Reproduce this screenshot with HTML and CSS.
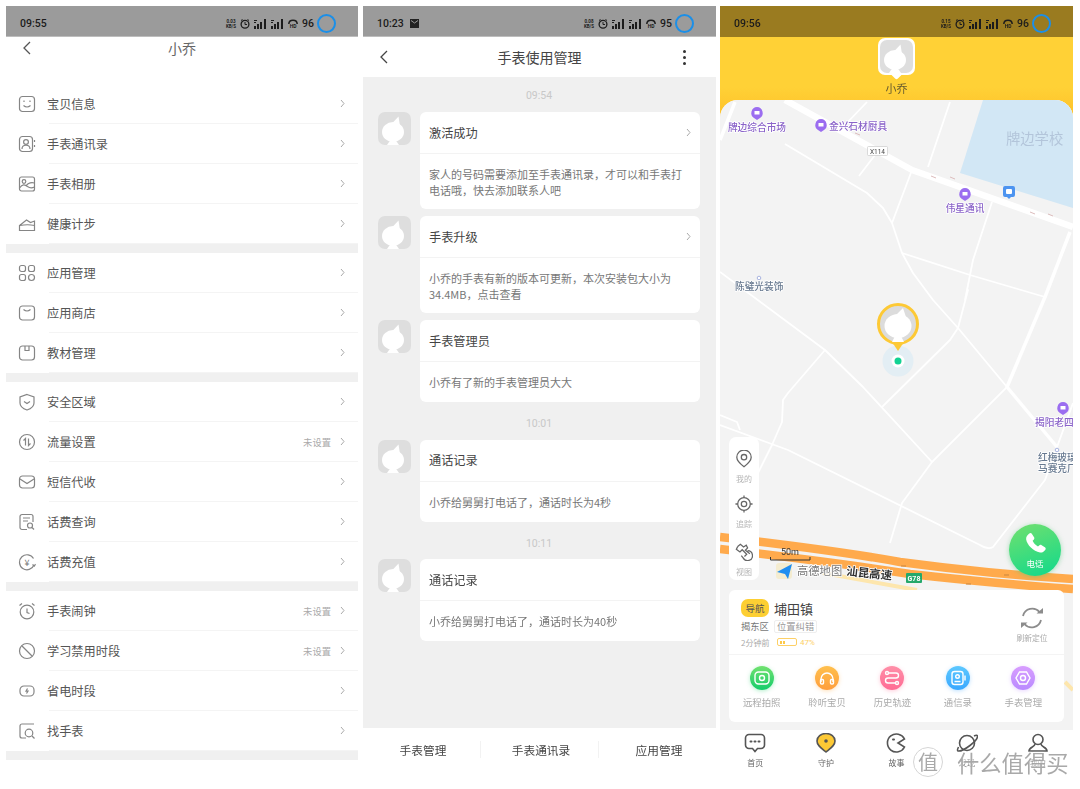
FILE: index.html
```html
<!DOCTYPE html>
<html lang="zh-CN">
<head>
  <meta charset="UTF-8" />
  <meta name="viewport" content="width=device-width, initial-scale=1.0"/>
  <title>小乔 - 手表管理</title>
  <link rel="stylesheet" href="styles.css">
</head>
<body>

<svg class="defs" width="0" height="0">
  <symbol id="kid" viewBox="0 0 33 33">
    <rect width="33" height="33" rx="7" fill="#dedede"/>
    <ellipse cx="15" cy="20" rx="11" ry="10" fill="#fff"/>
    <path d="M14 11.500 20.500 4.500 22 14z" fill="#fff"/>
    <path d="M9 33l3.500-5h5l3.500 5z" fill="#fff"/>
  </symbol>
  <symbol id="clock" viewBox="0 0 10 10"><circle cx="5" cy="5.300" r="3.900" fill="none" stroke="currentColor" stroke-width="1.300"/><path d="M5 3v2.500h2" fill="none" stroke="currentColor"/><path d="M1 1.500 2.500.5M9 1.500 7.500.5" stroke="currentColor"/></symbol>
  <symbol id="signal" viewBox="0 0 13 10"><path d="M0 7h2v3H0zM3 5h2v5H3zM6 3h2v7H6zM10 0h2v10h-2z" fill="currentColor"/><path d="M0 1h3v1H0zM0 3h2v1H0z" fill="currentColor"/></symbol>
  <symbol id="arch" viewBox="0 0 10 5"><path d="M.8 5C1 0 9 0 9.200 5" fill="none" stroke="currentColor" stroke-width="1.500"/></symbol>
  <symbol id="chev" viewBox="0 0 5 9"><path d="M1 1l3 3.500L1 8" fill="none" stroke="#aaa" stroke-width="1"/></symbol>
</svg>

<div class="page">

  <!-- left phone: settings list -->
  <section class="phone phone-list">
    <div class="status">
      <span class="time">09:55</span>
      <span class="status-right">
        <span class="speed">0.03<br>KB/S</span>
        <svg class="si-clock"><use href="#clock"/></svg>
        <svg class="si-signal"><use href="#signal"/></svg>
        <svg class="si-signal"><use href="#signal"/></svg>
        <span class="si-wifi"><svg class="si-arch"><use href="#arch"/></svg><b>HD</b></span>
        <span class="batt">96</span>
        <span class="ring"></span>
      </span>
    </div>
    <div class="topbar topbar-top">
      <span class="back"><svg width="8" height="14" viewBox="0 0 8 14"><path d="M7 1 1 7l6 6" fill="none" stroke="#555" stroke-width="1.300"/></svg></span>
      <h1 class="title title-light">小乔</h1>
      <span class="topbar-side"></span>
    </div>

    <ul class="menu">
      <li class="row"><svg class="ic" viewBox="0 0 18 18"><rect x="1.500" y="1.500" width="15" height="15" rx="3"/><path d="M6 5.500v1.500M12 5.500v1.500M5.500 10.500q3.500 3 7 0"/></svg><div class="row-body"><span class="row-label">宝贝信息</span><svg class="chev"><use href="#chev"/></svg></div></li>
      <li class="row"><svg class="ic" viewBox="0 0 18 18"><rect x="1.500" y="1.500" width="13" height="15" rx="3"/><circle cx="8" cy="7" r="2.400"/><path d="M4 14c0-5 8-5 8 0M16.500 5v2M16.500 10v2"/></svg><div class="row-body"><span class="row-label">手表通讯录</span><svg class="chev"><use href="#chev"/></svg></div></li>
      <li class="row"><svg class="ic" viewBox="0 0 18 18"><rect x="1.500" y="2" width="15" height="14" rx="2"/><circle cx="6" cy="6.500" r="1.800"/><path d="M1.500 13c3-4 5-4 8-1.500 2 1.500 4 2 7 .5M8 11c2-3 4-4 8.500-3"/></svg><div class="row-body"><span class="row-label">手表相册</span><svg class="chev"><use href="#chev"/></svg></div></li>
      <li class="row"><svg class="ic" viewBox="0 0 18 18"><path d="M1.500 15.500v-5l7-5.500 4 2.500 4-1.500v9.500zM2 10.500c5-1 10-1 14.500 0"/></svg><div class="row-body"><span class="row-label">健康计步</span><svg class="chev"><use href="#chev"/></svg></div></li>
    </ul>
    <div class="band"></div>

    <ul class="menu">
      <li class="row"><svg class="ic" viewBox="0 0 18 18"><rect x="1.500" y="1.500" width="6" height="6" rx="2"/><rect x="10.500" y="1.500" width="6" height="6" rx="2"/><rect x="1.500" y="10.500" width="6" height="6" rx="2"/><circle cx="13.500" cy="13.500" r="3"/></svg><div class="row-body"><span class="row-label">应用管理</span><svg class="chev"><use href="#chev"/></svg></div></li>
      <li class="row"><svg class="ic" viewBox="0 0 18 18"><rect x="1.500" y="2" width="15" height="14" rx="3"/><path d="M5.500 5.500q3.500 3 7 0"/></svg><div class="row-body"><span class="row-label">应用商店</span><svg class="chev"><use href="#chev"/></svg></div></li>
      <li class="row"><svg class="ic" viewBox="0 0 18 18"><rect x="1.500" y="2" width="15" height="14" rx="3"/><path d="M7 2v4.500h4V2"/></svg><div class="row-body"><span class="row-label">教材管理</span><svg class="chev"><use href="#chev"/></svg></div></li>
    </ul>
    <div class="band"></div>

    <ul class="menu">
      <li class="row"><svg class="ic" viewBox="0 0 18 18"><path d="M9 1.500l7 2.500v6c0 4-4 6-7 7-3-1-7-3-7-7V4zM6 8.500l3 2 3-2"/></svg><div class="row-body"><span class="row-label">安全区域</span><svg class="chev"><use href="#chev"/></svg></div></li>
      <li class="row"><svg class="ic" viewBox="0 0 18 18"><circle cx="9" cy="9" r="7.500"/><path d="M7.500 12.500v-7l-2 2M10.500 5.500v7l2-2"/></svg><div class="row-body"><span class="row-label">流量设置</span><span class="row-value">未设置</span><svg class="chev"><use href="#chev"/></svg></div></li>
      <li class="row"><svg class="ic" viewBox="0 0 18 18"><rect x="1.500" y="3" width="15" height="12" rx="3"/><path d="M2 6l7 4.500L16 6"/></svg><div class="row-body"><span class="row-label">短信代收</span><svg class="chev"><use href="#chev"/></svg></div></li>
      <li class="row"><svg class="ic" viewBox="0 0 18 18"><path d="M9 16.500H4a2 2 0 0 1-2-2v-11a2 2 0 0 1 2-2h9a2 2 0 0 1 2 2V9M5 5h7M5 8h5"/><circle cx="12" cy="12.500" r="2.500"/><path d="M14 14.500l2 2"/></svg><div class="row-body"><span class="row-label">话费查询</span><svg class="chev"><use href="#chev"/></svg></div></li>
      <li class="row"><svg class="ic" viewBox="0 0 18 18"><path d="M15.500 5.500A7.500 7.500 0 1 0 16 12"/><path d="M14.500 11.500l1.800 1.500 1.200-1.800"/><text x="9" y="12.500" class="ic-text">¥</text></svg><div class="row-body"><span class="row-label">话费充值</span><svg class="chev"><use href="#chev"/></svg></div></li>
    </ul>
    <div class="band"></div>

    <ul class="menu">
      <li class="row"><svg class="ic" viewBox="0 0 18 18"><circle cx="9" cy="10" r="6.800"/><path d="M9 6.500V10.500l2.500 1M1.500 3.500 4 1.500M16.500 3.500 14 1.500"/></svg><div class="row-body"><span class="row-label">手表闹钟</span><span class="row-value">未设置</span><svg class="chev"><use href="#chev"/></svg></div></li>
      <li class="row"><svg class="ic" viewBox="0 0 18 18"><circle cx="9" cy="9" r="7.500"/><path d="M4 4l10 10"/></svg><div class="row-body"><span class="row-label">学习禁用时段</span><span class="row-value">未设置</span><svg class="chev"><use href="#chev"/></svg></div></li>
      <li class="row"><svg class="ic" viewBox="0 0 18 18"><rect x="2" y="4" width="14" height="10" rx="4"/><path d="M9.500 6.500 8 9.200h2L8.500 11.500"/></svg><div class="row-body"><span class="row-label">省电时段</span><svg class="chev"><use href="#chev"/></svg></div></li>
      <li class="row"><svg class="ic" viewBox="0 0 18 18"><path d="M16 2H4a2 2 0 0 0-2 2v10a2 2 0 0 0 2 2h4"/><circle cx="11" cy="11" r="3.800"/><path d="M14 14l2.500 2.500"/></svg><div class="row-body"><span class="row-label">找手表</span><svg class="chev"><use href="#chev"/></svg></div></li>
    </ul>
    <div class="band"></div>
  </section>

  <!-- middle phone: message list -->
  <section class="phone phone-msg">
    <div class="status">
      <span class="time">10:23<svg class="si-mail" viewBox="0 0 9 9"><path d="M0 0h9v9H0z" fill="#222"/><path d="M1 1.500l3.500 2.500L8 1.500" fill="none" stroke="#999"/></svg></span>
      <span class="status-right">
        <span class="speed">0.08<br>KB/S</span>
        <svg class="si-clock"><use href="#clock"/></svg>
        <svg class="si-signal"><use href="#signal"/></svg>
        <svg class="si-signal"><use href="#signal"/></svg>
        <span class="si-wifi"><svg class="si-arch"><use href="#arch"/></svg><b>HD</b></span>
        <span class="batt">95</span>
        <span class="ring"></span>
      </span>
    </div>
    <div class="topbar">
      <span class="back"><svg width="8" height="14" viewBox="0 0 8 14"><path d="M7 1 1 7l6 6" fill="none" stroke="#444" stroke-width="1.300"/></svg></span>
      <h1 class="title">手表使用管理</h1>
      <span class="topbar-side more"><i></i><i></i><i></i></span>
    </div>

    <div class="msg-list">
      <div class="msg-time msg-time-first">09:54</div>
      <div class="msg">
        <svg class="msg-avatar"><use href="#kid"/></svg>
        <div class="msg-card">
          <div class="msg-head">激活成功<svg class="chev"><use href="#chev"/></svg></div>
          <p class="msg-body msg-body-two">家人的号码需要添加至手表通讯录，才可以和手表打电话哦，快去添加联系人吧</p>
        </div>
      </div>
      <div class="msg">
        <svg class="msg-avatar"><use href="#kid"/></svg>
        <div class="msg-card">
          <div class="msg-head">手表升级<svg class="chev"><use href="#chev"/></svg></div>
          <p class="msg-body msg-body-two">小乔的手表有新的版本可更新，本次安装包大小为<br>34.4MB，点击查看</p>
        </div>
      </div>
      <div class="msg">
        <svg class="msg-avatar"><use href="#kid"/></svg>
        <div class="msg-card">
          <div class="msg-head">手表管理员</div>
          <p class="msg-body">小乔有了新的手表管理员大大</p>
        </div>
      </div>
      <div class="msg-time">10:01</div>
      <div class="msg">
        <svg class="msg-avatar"><use href="#kid"/></svg>
        <div class="msg-card">
          <div class="msg-head">通话记录</div>
          <p class="msg-body">小乔给舅舅打电话了，通话时长为4秒</p>
        </div>
      </div>
      <div class="msg-time">10:11</div>
      <div class="msg">
        <svg class="msg-avatar"><use href="#kid"/></svg>
        <div class="msg-card">
          <div class="msg-head">通话记录</div>
          <p class="msg-body">小乔给舅舅打电话了，通话时长为40秒</p>
        </div>
      </div>
    </div>

    <div class="tabs">
      <span class="tab">手表管理</span>
      <span class="tab">手表通讯录</span>
      <span class="tab">应用管理</span>
    </div>
  </section>

  <!-- right phone: map -->
  <section class="phone phone-map">
    <div class="status status-gold">
      <span class="time">09:56</span>
      <span class="status-right">
        <span class="speed">0.15<br>KB/S</span>
        <svg class="si-clock"><use href="#clock"/></svg>
        <svg class="si-signal"><use href="#signal"/></svg>
        <svg class="si-signal"><use href="#signal"/></svg>
        <span class="si-wifi"><svg class="si-arch"><use href="#arch"/></svg><b>HD</b></span>
        <span class="batt">96</span>
        <span class="ring"></span>
      </span>
    </div>
    <div class="kid-head">
      <span class="kid-photo"><svg class="kid-img"><use href="#kid"/></svg></span>
      <span class="kid-name">小乔</span>
    </div>

    <div class="map">
      <svg class="map-canvas" viewBox="720 100 353 630">
        <rect x="720" y="100" width="353" height="630" fill="#f3f3f3"/>
        <path d="M983 100h90v108L960 173z" fill="#d2e7f5"/>
        <g class="road road-thin">
          <path d="M867 102l-24 25M950 102l-22 65M875 155l-16 21"/>
          <path d="M785 144l82 49 16 15 9 15 10 30 11 20 20 27 25 28 49 59"/>
          <path d="M912 170l-20 53M992 202l-19 58-8 40 3-10-10 38-8 12-68 67"/>
          <path d="M902 253l68 22 75 22"/>
          <path d="M1073 403l-16 44-12 33-52 67q-5 3-13-2L788 450l-68-25"/>
          <path d="M1007 387l-75 75-30 41-12 40"/>
          <path d="M720 272l105 78 38 37 69 75"/>
          <path d="M825 350l-37 43-5 7-1 22-10 23-14 28"/>
          <path d="M720 415l17 7 3 8"/>
        </g>
        <g class="road road-mid">
          <path d="M735 102l-15 38"/>
          <path d="M1070 232l-25 65-38 90 50 60"/>
        </g>
        <path class="road road-main" d="M785 100l127 70 161 57"/>
        <path d="M823 573l94 17M1065 682l8 8" fill="none" stroke="#fde6ad" stroke-width="4"/>
        <path d="M720 537q120 14 180 25 90 12 173 17M720 549q120 14 190 25 90 10 163 15" fill="none" stroke="#ffaa4c" stroke-width="8.500"/>
        <path d="M855 133l5 2M931 176l5 2M950 177l5 2M1030 212l5 2M1048 214l5 2" stroke="#dcbcbc" stroke-width="1"/>
        <path d="M901 566h5M1004 575h5M966 584h5M886 577h5" stroke="#c9853c" stroke-width="1"/>

        <g class="poi">
          <path d="M757 107a6 6 0 0 1 3 11l-3 2-3-2a6 6 0 0 1 3-11z"/><rect x="754.500" y="111" width="5" height="3.500" fill="#fff"/>
          <path d="M821 119a6 6 0 0 1 3 11l-3 2-3-2a6 6 0 0 1 3-11z"/><rect x="818.500" y="123" width="5" height="3.500" fill="#fff"/>
          <path d="M965 188a6 6 0 0 1 3 11l-3 2-3-2a6 6 0 0 1 3-11z"/><rect x="962.500" y="192" width="5" height="3.500" fill="#fff"/>
          <path d="M1063 402a6 6 0 0 1 3 11l-3 2-3-2a6 6 0 0 1 3-11z"/><rect x="1060.500" y="406" width="5" height="3.500" fill="#fff"/>
        </g>
        <path d="M1005 186h8a2 2 0 0 1 2 2v7a2 2 0 0 1-2 2h-2l-2 2-2-2h-2a2 2 0 0 1-2-2v-7a2 2 0 0 1 2-2z" fill="#4d94f0"/>
        <rect x="1006" y="189" width="6" height="5" rx="1" fill="#fff"/>
        <circle cx="759" cy="278" r="1.800" fill="#fff" stroke="#a9b4e0"/>
        <circle cx="1057" cy="450" r="1.800" fill="#fff" stroke="#a9b4e0"/>

        <text class="label label-poi" x="757" y="131" text-anchor="middle">牌边综合市场</text>
        <text class="label label-poi" x="829" y="130">金兴石材厨具</text>
        <text class="label label-poi" x="965" y="212" text-anchor="middle">伟星通讯</text>
        <text class="label label-poi" x="1035" y="426">揭阳老四</text>
        <text class="label label-school" x="1006" y="144">牌边学校</text>
        <text class="label label-shop" x="735" y="290">陈璧光装饰</text>
        <text class="label label-shop" x="1038" y="461">红梅玻璃</text>
        <text class="label label-shop" x="1038" y="472">马赛克厂</text>

        <rect x="867.500" y="146.500" width="20" height="9" rx="1" fill="#fff" stroke="#ccc" stroke-width=".7"/>
        <text class="label-x" x="877.500" y="153.500" text-anchor="middle">X114</text>

        <rect x="906" y="573" width="16" height="10" rx="1" fill="#25a86b"/>
        <text class="label-g" x="914" y="581" text-anchor="middle">G78</text>

        <text class="label-scale" x="781" y="555">50m</text>
        <path d="M770.500 557v3h39.500v-3" fill="none" stroke="#333" stroke-width="1"/>
        <rect x="776" y="563" width="16" height="16" rx="3" fill="#f4ecd0"/>
        <path d="M777 572l15-8-4 15-3-5z" fill="#1f8ef1"/>
        <text class="label-brand" x="797" y="575">高德地图</text>
        <text class="label-road" transform="translate(846 575) rotate(6)">汕昆高速</text>

        <circle cx="898" cy="361" r="15.500" fill="#e3eef4"/>
        <circle cx="898" cy="361" r="6.500" fill="#fff"/>
        <circle cx="898" cy="361" r="3.500" fill="#12d293"/>
        <path d="M892 342h12l-6 9z" fill="#fdc935"/>
        <circle cx="898" cy="324" r="19.500" fill="#dcdcdc" stroke="#fdc935" stroke-width="3"/>
        <ellipse cx="898" cy="326" rx="13.500" ry="12" fill="#fff"/>
        <path d="M896 315l7-7 3 9zM892 342l3-6h6l3 6z" fill="#fff"/>
      </svg>

      <div class="tools">
        <div class="tool">
          <svg class="tool-ic" viewBox="0 0 20 20"><path d="M10 18.500C6 15.500 2 12.500 2 8a8 8 0 0 1 16 0c0 4.500-4 7.500-8 10.500z"/><circle cx="10" cy="8" r="3"/></svg>
          <span>我的</span>
        </div>
        <div class="tool">
          <svg class="tool-ic" viewBox="0 0 20 20"><circle cx="10" cy="10" r="7"/><circle cx="10" cy="10" r="3"/><path d="M10 .5V3M10 17v2.500M.5 10H3M17 10h2.500"/></svg>
          <span>追踪</span>
        </div>
        <div class="tool">
          <svg class="tool-ic" viewBox="0 0 20 20"><path d="M3 4l3-2.500 3.500 3 3-2 1.500 3-2.500 2.500 5 4M3 4 1.500 7l4 3 2.500-2.500 5 5-2.500 2.500M14 8.500a5.500 5.500 0 1 1-5 8l-2-2.500"/></svg>
          <span>视图</span>
        </div>
      </div>

      <div class="call">
        <svg class="call-ic" viewBox="0 0 24 24"><path d="M6 2.500c1-.8 2-.6 2.600.3l2 3.200c.5.800.4 1.600-.3 2.300L9.200 9.400c.8 2 2.900 4.300 5.200 5.400l1.100-1c.7-.6 1.600-.7 2.400-.2l3.100 2c.9.600 1.100 1.700.3 2.600-1.400 1.700-3 2.800-5 2.500C10 19.700 3.800 13.500 3 8c-.2-2.200 1.300-4.200 3-5.500z"/></svg>
        <span>电话</span>
      </div>

      <div class="place">
        <div class="place-top">
          <div class="place-info">
            <div class="place-line"><span class="nav-pill">导航</span><span class="town">埔田镇</span></div>
            <div class="place-line place-line-sub"><span class="district">揭东区</span><span class="fix">位置纠错</span></div>
            <div class="place-line place-line-meta"><span class="ago">2分钟前</span><span class="power"><i></i><i></i></span><span class="percent">47%</span></div>
          </div>
          <div class="refresh">
            <svg class="refresh-ic" viewBox="0 0 26 26"><path d="M4 11A9.500 9.500 0 0 1 20.500 7M22 15a9.500 9.500 0 0 1-16.500 4"/><path class="fill" d="M17.500 8.500h6.500V3zM8.500 17.500H2V23z"/></svg>
            <span>刷新定位</span>
          </div>
        </div>
        <div class="features">
          <div class="feature">
            <span class="f-dot f-green"><svg viewBox="0 0 24 24"><rect x="5" y="6" width="14" height="12" rx="3.500"/><circle cx="12" cy="12" r="2.500"/></svg></span>
            <span>远程拍照</span>
          </div>
          <div class="feature">
            <span class="f-dot f-orange"><svg viewBox="0 0 24 24"><path d="M6 16v-3a6 6 0 0 1 12 0v3"/><rect x="5.500" y="13.500" width="3" height="4.500" rx="1"/><rect x="15.500" y="13.500" width="3" height="4.500" rx="1"/></svg></span>
            <span>聆听宝贝</span>
          </div>
          <div class="feature">
            <span class="f-dot f-pink"><svg viewBox="0 0 24 24"><path d="M8 7h8a2.500 2.500 0 0 1 0 5H8a2.500 2.500 0 0 0 0 5h8"/><circle cx="7" cy="7" r="1.500"/><circle cx="17" cy="17" r="1.500"/></svg></span>
            <span>历史轨迹</span>
          </div>
          <div class="feature">
            <span class="f-dot f-blue"><svg viewBox="0 0 24 24"><rect x="6" y="5.500" width="11" height="13" rx="2.500"/><circle cx="11.500" cy="10.500" r="1.800"/><path d="M8.500 15.500h6M19 9.500v5"/></svg></span>
            <span>通信录</span>
          </div>
          <div class="feature">
            <span class="f-dot f-purple"><svg viewBox="0 0 24 24"><path d="M8.500 6h7l3.500 6-3.500 6h-7L5 12z"/><circle cx="12" cy="12" r="2.500"/></svg></span>
            <span>手表管理</span>
          </div>
        </div>
      </div>
    </div>

    <nav class="bottom-nav">
      <div class="nav-item">
        <svg viewBox="0 0 22 20"><path d="M5 1.500h12a3.500 3.500 0 0 1 3.500 3.500v7a3.500 3.500 0 0 1-3.500 3.500h-3.500L11 18.500l-2.500-3H5A3.500 3.500 0 0 1 1.500 12V5A3.500 3.500 0 0 1 5 1.500z"/><path class="dots" d="M6.500 8.500h1M10.500 8.500h1M14.500 8.500h1"/></svg>
        <span>首页</span>
      </div>
      <div class="nav-item">
        <svg viewBox="0 0 22 20"><path class="pin" d="M11 19C6 15 2 12.500 2 8a9 7.500 0 0 1 18 0c0 4.500-4 7-9 11z"/><circle cx="11" cy="8" r="1.800" fill="#555" stroke="none"/></svg>
        <span>守护</span>
      </div>
      <div class="nav-item">
        <svg viewBox="0 0 22 20"><path d="M19.500 6A9 9 0 1 0 19.500 14L13 10z"/><path class="dots" d="M8 6.500h1"/></svg>
        <span>故事</span>
      </div>
      <div class="nav-item">
        <svg viewBox="0 0 22 20"><circle cx="11" cy="10" r="7.500"/><path d="M18 3c2-1 3.500-1 3.500.5 0 2-3 5.500-7.500 9-4 3-9.500 6-12 5.500-1-.5-.5-2 .5-4"/></svg>
        <span>发现</span>
      </div>
      <div class="nav-item">
        <svg viewBox="0 0 22 20"><circle cx="11" cy="6.500" r="5"/><path d="M8 11c0 3-6 3-6 7h18c0-4-6-4-6-7"/></svg>
        <span>我的</span>
      </div>
      <div class="watermark"><span class="wm-seal">值</span><span class="wm-text">什么值得买</span></div>
    </nav>
  </section>

</div>

</body>
</html>
```

FILE: styles.css
```css
* {
  box-sizing: border-box;
}

body {
  margin: 0;
  background: #fff;
  font-family: "Noto Sans CJK SC", "Noto Sans", sans-serif;
  color: #555;
}

ul, h1, p {
  margin: 0;
  padding: 0;
  list-style: none;
  font-weight: 400;
}

.defs {
  display: block;
  height: 0;
}

.page {
  display: flex;
  padding: 6px 0 0 6px;
  filter: blur(0.35px);
}

.phone {
  flex: none;
  width: 353px;
  background: #fff;
}

.phone-list {
  width: 352px;
  margin-right: 5px;
}

.phone-msg {
  margin-right: 4px;
}

/* status bar */
.status {
  display: flex;
  justify-content: space-between;
  align-items: center;
  height: 31px;
  padding: 5px 22px 0 14px;
  background: #9b9b9b;
  color: #1c1c1c;
  border-bottom: 1px solid #bdbdbd;
}

.status-gold {
  background: #9a7b20;
  border-bottom-color: #9a7b20;
}

.time {
  display: flex;
  align-items: center;
  font-family: Roboto, sans-serif;
  font-size: 10.5px;
  font-weight: 500;
}

.si-mail {
  width: 9px;
  height: 9px;
  margin-left: 6px;
}

.status-right {
  display: flex;
  align-items: center;
  gap: 4px;
}

.speed {
  font-family: Roboto, sans-serif;
  font-size: 4.5px;
  font-weight: 700;
  line-height: 5px;
  text-align: center;
}

.si-clock {
  width: 10px;
  height: 10px;
}

.si-signal {
  width: 13px;
  height: 10px;
}

.si-wifi {
  display: flex;
  flex-direction: column;
  align-items: center;
  width: 10px;
}

.si-arch {
  width: 10px;
  height: 5px;
}

.si-wifi b {
  font-family: Roboto, sans-serif;
  font-size: 5px;
  line-height: 5px;
}

.batt {
  font-family: Roboto, sans-serif;
  font-size: 10.5px;
  font-weight: 500;
}

.ring {
  width: 19px;
  height: 19px;
  margin-left: -1px;
  border: 2px solid #1b8fe8;
  border-radius: 50%;
}

/* top bars */
.topbar {
  display: flex;
  align-items: center;
  height: 40px;
}

.topbar-top {
  align-items: flex-start;
  height: 47px;
}

.back {
  flex: none;
  display: flex;
  width: 64px;
  height: 22px;
  padding-left: 17px;
  align-items: center;
}

.topbar-side {
  flex: none;
  width: 64px;
}

.title {
  flex: 1;
  font-size: 14px;
  line-height: 22px;
  text-align: center;
  color: #444;
}

.title-light {
  color: #666;
}

.more {
  display: flex;
  flex-direction: column;
  align-items: center;
  gap: 3px;
}

.more i {
  width: 3px;
  height: 3px;
  background: #333;
  border-radius: 50%;
}

/* settings list */
.row {
  display: flex;
  align-items: center;
  height: 40px;
  padding-left: 12px;
}

.ic {
  flex: none;
  width: 18px;
  height: 18px;
  fill: none;
  stroke: #858585;
  stroke-width: 1.2;
}

.ic-text {
  font-size: 9px;
  fill: #777;
  stroke: none;
  text-anchor: middle;
}

.row-body {
  flex: 1;
  display: flex;
  align-items: center;
  height: 40px;
  margin-left: 13px;
  padding-right: 13px;
  border-bottom: 1px solid #f4f4f4;
}

.row-label {
  flex: 1;
  margin-left: -2px;
  font-size: 12.2px;
  color: #555;
}

.row-value {
  margin-right: 9px;
  font-size: 9.3px;
  color: #aaa;
}

.chev {
  flex: none;
  width: 5px;
  height: 9px;
}

.band {
  height: 9px;
  background: #f0f0f0;
}

/* messages */
.msg-list {
  height: 651px;
  padding: 0 16px 0 15px;
  background: #f0f0f0;
}

.msg-time {
  height: 37.5px;
  padding-top: 14px;
  font-family: Roboto, sans-serif;
  font-size: 10.5px;
  line-height: 16px;
  text-align: center;
  color: #c8c8c8;
}

.msg-time-first {
  height: 35px;
  padding-top: 11px;
}

.msg {
  display: flex;
  gap: 9px;
  margin-bottom: 7px;
}

.msg:has(+ .msg-time), .msg:last-child {
  margin-bottom: 0;
}

.msg-avatar {
  flex: none;
  width: 33px;
  height: 33px;
}

.msg-card {
  flex: 1;
  background: #fff;
  border-radius: 6px;
}

.msg-head {
  display: flex;
  justify-content: space-between;
  align-items: center;
  height: 42px;
  padding: 0 9px;
  border-bottom: 1px solid #f3f3f3;
  font-size: 12.2px;
  color: #444;
}

.msg-body {
  padding: 12px 9px;
  font-size: 11px;
  line-height: 16px;
  color: #777;
}

.msg-body-two {
  padding-bottom: 11px;
}

.tabs {
  display: flex;
  align-items: center;
  height: 42px;
}

.tab {
  flex: 1;
  height: 17px;
  padding-left: 3px;
  font-size: 11.7px;
  line-height: 17px;
  text-align: center;
  color: #444;
}

.tab + .tab {
  border-left: 1px solid #f2f2f2;
}

/* map phone */
.kid-head {
  display: flex;
  flex-direction: column;
  align-items: center;
  height: 83px;
  background: linear-gradient(#ffd136 60%, #fec028);
}

.kid-photo {
  position: relative;
  display: block;
  width: 37px;
  height: 37px;
  margin-top: 1px;
  background: #fff;
  border-radius: 7px;
  padding: 2px;
}

.kid-photo::after {
  content: "";
  position: absolute;
  left: 14px;
  bottom: -3px;
  width: 9px;
  height: 9px;
  background: #fff;
  border-radius: 2px;
  transform: rotate(45deg);
}

.kid-img {
  position: relative;
  z-index: 1;
  display: block;
  width: 33px;
  height: 33px;
}

.kid-name {
  margin-top: 6px;
  font-size: 11px;
  line-height: 14px;
  color: #665a2e;
}

.map {
  position: relative;
  display: flex;
  flex-direction: column;
  justify-content: flex-end;
  height: 630px;
  margin-top: -20px;
  padding: 0 9px 8px;
  border-radius: 18px 18px 0 0;
  overflow: hidden;
  background: #f3f3f3;
}

.map-canvas {
  position: absolute;
  top: 0;
  left: 0;
  width: 353px;
  height: 630px;
}

.road {
  fill: none;
  stroke: #fff;
  stroke-linejoin: round;
}

.road-thin {
  stroke-width: 1.8;
}

.road-mid {
  stroke-width: 3.5;
}

.road-main {
  stroke-width: 6.5;
}

.poi {
  fill: #9b6df0;
}

.label {
  font-size: 9.7px;
  font-weight: 500;
  stroke: #fff;
  stroke-width: 1.5px;
  paint-order: stroke;
}

.label-poi {
  fill: #8a63c9;
}

.label-shop {
  fill: #66788f;
}

.label-school {
  font-size: 14.3px;
  font-weight: 400;
  fill: #b3c5da;
  stroke: none;
}

.label-x {
  font-family: Roboto, sans-serif;
  font-size: 6.5px;
  fill: #444;
}

.label-g {
  font-family: Roboto, sans-serif;
  font-size: 7px;
  font-weight: 700;
  fill: #fff;
}

.label-scale {
  font-family: Roboto, sans-serif;
  font-size: 9px;
  fill: #333;
}

.label-brand {
  font-size: 11.3px;
  fill: #777;
  stroke: #fff;
  stroke-width: 1.5px;
  paint-order: stroke;
}

.label-road {
  font-size: 11.5px;
  font-weight: 700;
  fill: #333;
  stroke: #fff;
  stroke-width: 1.5px;
  paint-order: stroke;
}

/* overlays on the map */
.tools {
  position: absolute;
  left: 9px;
  top: 337px;
  display: flex;
  flex-direction: column;
  width: 30px;
  height: 143px;
  padding-top: 13px;
  gap: 10px;
  background: #fff;
  border-radius: 7px;
}

.tool {
  display: flex;
  flex-direction: column;
  align-items: center;
  height: 35px;
  font-size: 8px;
  line-height: 12px;
  color: #b5b5b5;
}

.tool:last-child {
  margin-top: 3px;
}

.tool span {
  margin-top: 5px;
}

.tool-ic {
  flex: none;
  width: 18px;
  height: 18px;
  fill: none;
  stroke: #666;
  stroke-width: 1.4;
}

.call {
  position: absolute;
  left: 289px;
  top: 424px;
  display: flex;
  flex-direction: column;
  align-items: center;
  width: 52px;
  height: 52px;
  padding-top: 7px;
  border-radius: 50%;
  background: linear-gradient(160deg, #72e06e, #0fd98c);
  box-shadow: 0 1px 5px rgba(80, 200, 120, 0.5);
  color: #fff;
  font-size: 8.5px;
  line-height: 11px;
}

.call-ic {
  flex: none;
  width: 25px;
  height: 25px;
  margin-bottom: 2px;
  fill: #fff;
}

/* location card */
.place {
  position: relative;
  height: 132px;
  background: #fff;
  border-radius: 6px;
}

.place-top {
  display: flex;
  justify-content: space-between;
  height: 65px;
  padding: 9px 16px 0 12px;
  border-bottom: 1px solid #f4f4f4;
}

.place-line {
  display: flex;
  align-items: center;
  height: 18px;
}

.place-line-sub {
  height: 14px;
  margin-top: 2px;
}

.place-line-meta {
  height: 12px;
  margin-top: 3px;
}

.nav-pill {
  width: 28px;
  height: 18px;
  margin-right: 5px;
  background: #fdcf33;
  border-radius: 7px;
  font-size: 9.5px;
  line-height: 18px;
  text-align: center;
  color: #555;
}

.town {
  font-size: 13px;
  color: #444;
}

.district {
  width: 33px;
  font-size: 9.3px;
  color: #777;
}

.fix {
  height: 13px;
  padding: 0 2px;
  border: 1px solid #eee;
  border-radius: 2px;
  font-size: 9.3px;
  line-height: 11px;
  color: #999;
}

.ago {
  width: 36px;
  font-size: 8px;
  color: #aaa;
}

.power {
  display: flex;
  gap: 1px;
  width: 20px;
  height: 8px;
  padding: 1.5px 2px;
  border: 1px solid #fdd066;
  border-radius: 2px;
}

.power i {
  width: 2px;
  background: #fdc94a;
}

.percent {
  margin-left: 3px;
  font-family: Roboto, sans-serif;
  font-size: 8px;
  color: #fdd066;
}

.refresh {
  display: flex;
  flex-direction: column;
  align-items: center;
  width: 32px;
  font-size: 7.8px;
  line-height: 12px;
  color: #aaa;
  white-space: nowrap;
}

.refresh-ic {
  flex: none;
  width: 26px;
  height: 26px;
  margin-top: 6px;
  margin-bottom: 1px;
  fill: none;
  stroke: #8c8c8c;
  stroke-width: 1.8;
}

.refresh-ic .fill {
  fill: #8c8c8c;
  stroke: none;
}

.features {
  display: grid;
  grid-template-columns: repeat(5, 1fr);
  padding: 11px 8px 0 0;
}

.feature {
  display: flex;
  flex-direction: column;
  align-items: center;
  font-size: 9.4px;
  line-height: 13px;
  color: #aaa;
}

.f-dot {
  display: block;
  width: 24px;
  height: 24px;
  margin-bottom: 6px;
  border-radius: 50%;
}

.f-dot svg {
  display: block;
  fill: none;
  stroke: #fff;
  stroke-width: 1.4;
}

.f-green {
  background: linear-gradient(#72e26f, #14cc6b);
  box-shadow: 0 1px 4px rgba(40, 210, 110, 0.35);
}

.f-orange {
  background: linear-gradient(#ffc04d, #ff9e3d);
  box-shadow: 0 1px 4px rgba(255, 170, 60, 0.35);
}

.f-pink {
  background: linear-gradient(#ff8fa8, #ff6b94);
  box-shadow: 0 1px 4px rgba(255, 110, 150, 0.35);
}

.f-blue {
  background: linear-gradient(#5cc8ff, #3aa8ff);
  box-shadow: 0 1px 4px rgba(70, 170, 255, 0.35);
}

.f-purple {
  background: linear-gradient(#d89dff, #b98bff);
  box-shadow: 0 1px 4px rgba(190, 140, 255, 0.35);
}

/* bottom nav */
.bottom-nav {
  position: relative;
  display: grid;
  grid-template-columns: repeat(5, 1fr);
  height: 49px;
  padding-top: 3px;
}

.nav-item {
  display: flex;
  flex-direction: column;
  align-items: center;
  font-size: 8px;
  line-height: 11px;
  color: #666;
}

.nav-item svg {
  flex: none;
  width: 22px;
  height: 20px;
  margin-bottom: 4px;
  fill: none;
  stroke: #555;
  stroke-width: 1.6;
}

.nav-item .pin {
  fill: #fdc935;
}

.nav-item .dots {
  stroke-width: 2;
  stroke-linecap: round;
}

.watermark {
  position: absolute;
  left: 193px;
  top: 17px;
  display: flex;
  align-items: center;
  color: rgba(140, 140, 140, 0.75);
  text-shadow: 0 0 2px #fff, 0 0 2px #fff;
}

.wm-seal {
  width: 30px;
  height: 30px;
  margin-right: 14px;
  border: 1px solid #d5d5d5;
  border-radius: 50%;
  font-size: 20px;
  line-height: 27px;
  text-align: center;
}

.wm-text {
  font-size: 22.3px;
  line-height: 30px;
  white-space: nowrap;
}
```
